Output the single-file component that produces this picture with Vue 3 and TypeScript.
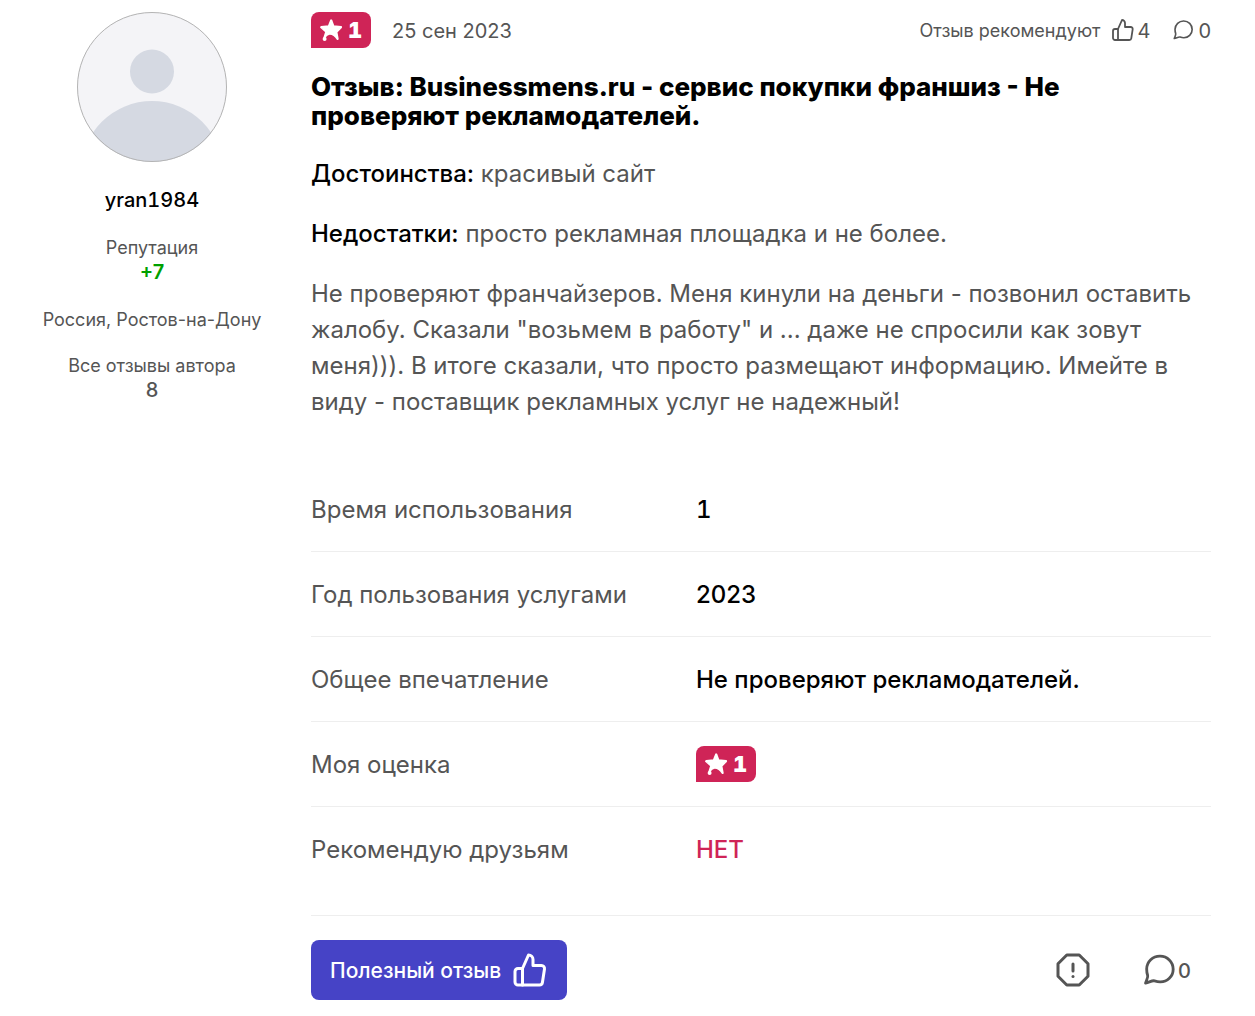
<script setup lang="ts">
import { defineComponent, h } from 'vue'

interface Fact {
  label: string
  value: string
  kind?: 'rating' | 'negative' | 'count'
}

const facts: Fact[] = [
  { label: 'Время использования', value: '1', kind: 'count' },
  { label: 'Год пользования услугами', value: '2023' },
  { label: 'Общее впечатление', value: 'Не проверяют рекламодателей.' },
  { label: 'Моя оценка', value: '1', kind: 'rating' },
  { label: 'Рекомендую друзьям', value: 'НЕТ', kind: 'negative' },
]

const iconPaths: Record<string, string[]> = {
  thumb: [
    'M14 9V5a3 3 0 0 0-3-3l-4 9v11h11.28a2 2 0 0 0 2-1.7l1.38-9a2 2 0 0 0-2-2.3z',
    'M7 22H4a2 2 0 0 1-2-2v-7a2 2 0 0 1 2-2h3',
  ],
  bubble: [
    'M22 11.4a9 9 0 0 1-9.2 9c-1.900 0-3-.4-4.300-.8-1.400-.2-3.200.9-6 1.700.8-2.400 1.900-4.200 1.500-5.400C3.500 14.500 3.300 12.800 3.300 11.300A9.300 9.300 0 0 1 12.700 2.200 9.200 9.200 0 0 1 22 11.400z',
  ],
  alert: ['M7.86 2h8.28L22 7.86v8.28L16.14 22H7.86L2 16.14V7.86z', 'M12 8v4.600', 'M12 16.400h.01'],
}

const LineIcon = defineComponent({
  props: { name: { type: String, required: true }, size: { type: Number, default: 24 } },
  setup(props) {
    return () =>
      h(
        'svg',
        {
          width: props.size,
          height: props.size,
          viewBox: '0 0 24 24',
          fill: 'none',
          stroke: 'currentColor',
          'stroke-width': props.size > 24 ? 2 : 1.8,
          'stroke-linecap': 'round',
          'stroke-linejoin': 'round',
          'aria-hidden': 'true',
        },
        iconPaths[props.name].map((d) => h('path', { d })),
      )
  },
})

const RatingBadge = defineComponent({
  props: { value: { type: String, required: true } },
  setup(props) {
    return () => [
      h('svg', { width: 24, height: 24, viewBox: '0 0 24 24', 'aria-hidden': 'true' }, [
        h('path', {
          d: 'M12.2 2.400 14.400 8.400 22 9.200 17.300 14 18.600 21C16.500 17.600 13 15.400 9.800 15.800 7.900 16 6.300 17.600 5.400 19.800L7.300 13.800 2.200 9.200 9.800 8.400z',
          fill: 'currentColor',
          stroke: 'currentColor',
          'stroke-width': 2.2,
          'stroke-linejoin': 'round',
        }),
        h('circle', { cx: 5.6, cy: 20.9, r: 2, fill: 'currentColor' }),
      ]),
      h('span', props.value),
    ]
  },
})
</script>

<template>
  <article class="review">
    <aside class="author">
      <svg class="avatar" viewBox="0 0 150 150" role="img" aria-label="Аватар">
        <defs>
          <clipPath id="face"><circle cx="75" cy="75" r="75" /></clipPath>
        </defs>
        <g clip-path="url(#face)">
          <rect width="150" height="150" fill="#f4f4f7" />
          <circle cx="75" cy="59.5" r="22" fill="#d5d9e2" />
          <circle cx="75" cy="160" r="71" fill="#d5d9e2" />
        </g>
        <circle cx="75" cy="75" r="74.5" fill="none" stroke="#b4b4b4" />
      </svg>
      <a class="name" href="#">yran1984</a>
      <div class="stat">Репутация<strong class="plus">+7</strong></div>
      <div class="place">Россия, Ростов-на-Дону</div>
      <div class="stat">Все отзывы автора<a class="amount" href="#">8</a></div>
    </aside>

    <main class="body">
      <header class="top">
        <span class="badge"><RatingBadge value="1" /></span>
        <time class="date" datetime="2023-09-25">25 сен 2023</time>
        <span class="caption">Отзыв рекомендуют</span>
        <span class="tally"><LineIcon name="thumb" /><span>4</span></span>
        <a class="tally comments" href="#"><LineIcon name="bubble" :size="22" /><span>0</span></a>
      </header>

      <h1 class="title">Отзыв: Businessmens.ru - сервис покупки франшиз - Не проверяют рекламодателей.</h1>
      <p><b>Достоинства:</b> красивый сайт</p>
      <p><b>Недостатки:</b> просто рекламная площадка и не более.</p>
      <p>Не проверяют франчайзеров. Меня кинули на деньги - позвонил оставить жалобу. Сказали "возьмем в работу" и ... даже не спросили как зовут меня))). В итоге сказали, что просто размещают информацию. Имейте в виду - поставщик рекламных услуг не надежный!</p>

      <table class="facts">
        <tbody>
          <tr v-for="fact in facts" :key="fact.label">
            <th scope="row">{{ fact.label }}</th>
            <td :class="fact.kind">
              <span v-if="fact.kind === 'rating'" class="badge"><RatingBadge :value="fact.value" /></span>
              <template v-else>{{ fact.value }}</template>
            </td>
          </tr>
        </tbody>
      </table>

      <footer class="actions">
        <button class="useful" type="button"><span>Полезный отзыв</span><LineIcon name="thumb" :size="36" /></button>
        <button class="plain" type="button" aria-label="Пожаловаться"><LineIcon name="alert" :size="36" /></button>
        <button class="plain" type="button"><LineIcon name="bubble" :size="34" /><span>0</span></button>
      </footer>
    </main>
  </article>
</template>

<style>
body {
  margin: 0;
  background: #fff;
}
</style>

<style scoped>
.review {
  display: flex;
  gap: 51px;
  padding: 12px 44px 16px;
  color: #555;
  font-family: Inter, "Noto Sans", sans-serif;
  font-size: 24px;
  line-height: 36px;
}
a {
  color: inherit;
  text-decoration: none;
}
svg {
  flex: none;
}
.author {
  display: flex;
  flex: 0 0 216px;
  flex-direction: column;
  align-items: center;
  min-width: 0;
  font-size: 18px;
  line-height: 24px;
  text-align: center;
  white-space: nowrap;
}
.avatar {
  width: 150px;
  height: 150px;
}
.name {
  margin: 26px 0 24px;
  color: #000;
  font-size: 20px;
  font-weight: 500;
}
.name,
.badge,
.count {
  font-variant-numeric: tabular-nums;
}
.stat {
  display: flex;
  flex-direction: column;
}
.plus,
.amount {
  font-size: 20px;
  font-weight: 500;
}
.plus {
  color: #00a000;
  font-weight: 600;
}
.place {
  margin: 24px 0 22px;
}
.body {
  flex: 1;
  min-width: 0;
}
.top {
  display: flex;
  align-items: center;
  font-size: 20px;
  line-height: 34px;
}
.badge {
  display: flex;
  box-sizing: border-box;
  width: 60px;
  height: 36px;
  align-items: center;
  gap: 5px;
  padding: 0 8px;
  border-radius: 8px 8px 8px 0;
  background: #cf2457;
  color: #fff;
  font-size: 22px;
  font-weight: 900;
  line-height: 34px;
}
.date,
.caption,
.top span > span,
.top a > span,
.rating span > span {
  padding-top: 2px;
}
.date {
  margin-left: 21px;
}
.caption {
  margin-left: auto;
  font-size: 18px;
}
.tally {
  display: flex;
  align-items: center;
  gap: 2px;
  margin-left: 11px;
}
.comments {
  gap: 4px;
  margin-left: 22px;
}
.title {
  margin: 24px 0 26px;
  padding-right: 40px;
  color: #000;
  font-size: 26px;
  font-weight: 800;
  line-height: 29px;
}
p {
  margin: 0 0 24px;
}
b {
  color: #000;
  font-weight: 500;
}
.facts {
  width: 100%;
  margin-top: 47px;
  border-collapse: separate;
  border-spacing: 0;
}
th,
td {
  box-sizing: border-box;
  height: 85px;
  padding: 2px 0 0;
  border-bottom: 1px solid #eee;
  text-align: left;
}
th {
  width: 385px;
  font-weight: 400;
}
td {
  color: #000;
  font-weight: 500;
}
.rating {
  padding: 0;
}
tr:last-child > * {
  border-bottom-color: transparent;
}
.negative {
  color: #cf2457;
}
.actions {
  display: flex;
  align-items: center;
  margin-top: 23px;
  padding-top: 24px;
  border-top: 1px solid #eee;
}
button {
  display: flex;
  align-items: center;
  border: 0;
  font: inherit;
  font-size: 20px;
  font-weight: 500;
  line-height: 34px;
  white-space: nowrap;
  cursor: pointer;
}
button span {
  padding-top: 2px;
}
.useful {
  width: 256px;
  height: 60px;
  justify-content: space-between;
  margin-right: auto;
  padding: 0 19px;
  border-radius: 8px;
  background: #4643c6;
  color: #fff;
  font-size: 21px;
}
.plain {
  gap: 2px;
  margin-right: 20px;
  padding: 0;
  background: none;
  color: #555;
}
.plain + .plain {
  margin-left: 31px;
}
</style>
